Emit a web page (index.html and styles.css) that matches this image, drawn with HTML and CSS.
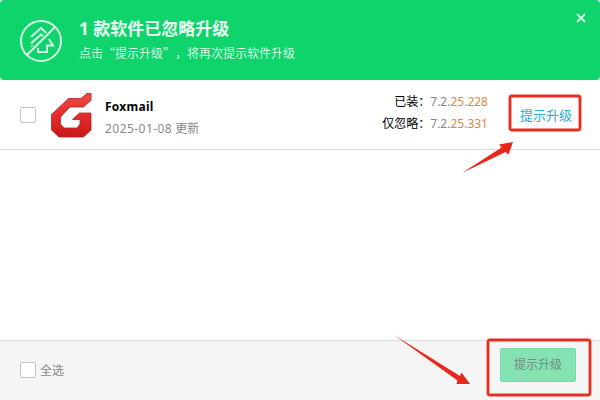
FILE: index.html
```html
<!DOCTYPE html>
<html lang="zh-CN">
<head>
<meta charset="utf-8">
<title>软件升级</title>
<link rel="stylesheet" href="styles.css">
</head>
<body>
<div class="window">
  <header class="header">
    <svg class="header-icon" width="44" height="44" viewBox="0 0 44 44" fill="none" stroke="#d6fbe8" stroke-width="2">
      <path d="M12 18 22 9l8 7.500M12 24.500l10-9 3 2.500M12 27.500h6M30 20l4 6.500h-6V33h-9v-4"/>
      <path d="M8 36 36 8" stroke="#0fd36b" stroke-width="4"/>
      <circle cx="22" cy="22" r="20"/>
      <path d="M7.500 36.500 36.500 7.500"/>
    </svg>
    <div class="header-text">
      <h1 class="title">1 款软件已忽略升级</h1>
      <p class="subtitle">点击“提示升级”，将再次提示软件升级</p>
    </div>
    <svg class="close" width="12" height="12" viewBox="0 0 12 12" fill="none" stroke="#d6fbe8" stroke-width="1.800"><path d="m2 2 8 8m0-8-8 8"/></svg>
  </header>
  <main class="list">
    <div class="row">
      <span class="checkbox"></span>
      <svg class="app-icon" width="44" height="48" viewBox="0 0 44 48">
        <defs><linearGradient id="red" x1="0" y1="0" x2="0" y2="1"><stop offset="0" stop-color="#f14a42"/><stop offset=".5" stop-color="#e32d2a"/><stop offset="1" stop-color="#c91718"/></linearGradient></defs>
        <path d="M41 2.500h-4L31 7.500H18.500L1.500 23.500V39L9 46H33.500l7.500-7V22H29.500l-7 6.500H30v4.500l-3 4H14l-3.500-4V26L20 16H33.500L41 9Z" fill="url(#red)" stroke="#a92325" stroke-width=".8"/>
      </svg>
      <div class="app-info">
        <div class="app-name">Foxmail</div>
        <div class="app-date"><span class="date">2025-01-08</span> 更新</div>
      </div>
      <div class="versions">
        <div>已装：<span class="ver">7.2.<span class="diff">25.228</span></span></div>
        <div>仅忽略：<span class="ver">7.2.<span class="diff">25.331</span></span></div>
      </div>
      <a class="link">提示升级</a>
    </div>
  </main>
  <footer class="footer">
    <span class="checkbox"></span>
    <span class="select-all">全选</span>
    <button class="button">提示升级</button>
  </footer>
  <svg class="marks" width="600" height="400" viewBox="0 0 600 400">
    <g fill="none" stroke="#ffb8ae" stroke-width="4">
      <rect x="510" y="96" width="70" height="34" rx="2"/>
      <rect x="488" y="340" width="102" height="55" rx="2"/>
    </g>
    <g fill="none" stroke="#e12d25" stroke-width="2.300">
      <rect x="510" y="96" width="70" height="34" rx="2"/>
      <rect x="488" y="340" width="102" height="55" rx="2"/>
    </g>
    <g fill="#e9271d">
      <path d="M462 173 501.500 147.500 499 144.500 513 142 508.500 154.500 505.500 152Z"/>
      <path d="M394 335 460 376 461.500 372.500 470 384 456.500 384 457.500 380.500Z"/>
    </g>
  </svg>
</div>
</body>
</html>
```
FILE: styles.css
```css
* { box-sizing: border-box; }
body { margin: 0; background: #fff; }
.window {
  position: relative;
  width: 600px;
  height: 400px;
  display: flex;
  flex-direction: column;
  overflow: hidden;
  font: 12px/18px "Noto Sans", "Noto Sans CJK SC", sans-serif;
  white-space: nowrap;
}
.header {
  height: 80px;
  flex: none;
  display: flex;
  align-items: flex-start;
  padding: 0 13px 0 19px;
  background: #0fd36b;
  border-radius: 4px;
  color: #e9fff4;
}
.header-icon { margin-top: 19px; }
.header-text { flex: 1; margin-left: 16px; padding-top: 17px; }
.title { margin: 0; font-size: 17px; line-height: 24px; font-weight: 700; }
.subtitle { margin: 2px 0 0; font: 12px/19px "Noto Sans CJK SC", sans-serif; text-spacing-trim: space-all; color: #d6fbe8; }
.close { margin-top: 12px; }
.list { flex: 1; }
.row {
  height: 70px;
  display: flex;
  align-items: center;
  padding: 0 28px 0 20px;
  border-bottom: 1px solid #dcdcdc;
}
.checkbox { flex: none; width: 16px; height: 16px; border: 1px solid #c4c4c4; border-radius: 2px; background: #fff; }
.app-icon { margin: 1px 0 0 14px; }
.app-info { flex: 1; margin-left: 11px; padding-top: 7px; line-height: 22px; }
.app-name { font-weight: 700; color: #000; letter-spacing: .25px; }
.app-date { color: #888; }
.date { letter-spacing: .45px; }
.versions { margin-right: 32px; text-align: right; line-height: 22px; padding-bottom: 4px; color: #000; }
.ver { color: #888; }
.diff { color: #d98a43; }
.link { font-size: 13px; color: #2badd5; }
.footer {
  height: 60px;
  flex: none;
  display: flex;
  align-items: center;
  padding: 0 24px 0 20px;
  border-top: 1px solid #dcdcdc;
  background: #f5f5f5;
}
.footer .checkbox { margin-bottom: 2px; }
.select-all { flex: 1; margin-left: 4px; color: #888; }
.button {
  width: 76px;
  height: 34px;
  margin-bottom: 11px;
  padding: 0;
  border: 1px solid #7bd9a9;
  border-radius: 2px;
  background: #85e2b2;
  color: #6f8d7e;
  font: inherit;
}
.marks { position: absolute; left: 0; top: 0; pointer-events: none; }
```
